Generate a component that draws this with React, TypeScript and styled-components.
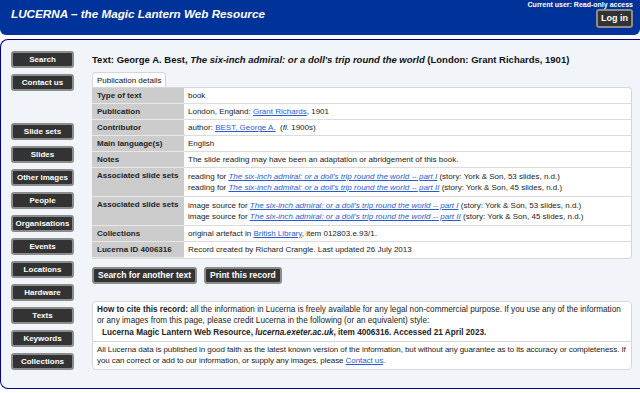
import React from 'react';
import styled, { createGlobalStyle } from 'styled-components';

const GlobalStyle = createGlobalStyle`
  html, body {
    margin: 0;
    padding: 0;
    background: #ffffff;
    font-family: "Liberation Sans", Arial, sans-serif;
  }
`;

const Page = styled.div`
  width: 640px;
  height: 393px;
  overflow: hidden;
  display: flex;
  flex-direction: column;
`;

const Header = styled.header`
  height: 35px;
  background: #003399;
  border-bottom-left-radius: 6px;
  border-bottom-right-radius: 6px;
  display: flex;
  justify-content: space-between;
  align-items: flex-start;
  padding: 0 7px 0 11px;
  box-sizing: border-box;
`;

const SiteTitle = styled.h1`
  margin: 7px 0 0;
  color: #ffffff;
  font-size: 11.7px;
  font-weight: bold;
  font-style: italic;
`;

const UserBox = styled.div`
  display: flex;
  flex-direction: column;
  align-items: flex-end;
  padding-top: 1px;
  gap: 1px;
`;

const UserText = styled.div`
  color: #ffffff;
  font-size: 7px;
  font-weight: bold;
`;

const Button = styled.button`
  background: #333333;
  color: #ffffff;
  border: 2px solid #8c8c8c;
  border-radius: 3px;
  font-family: inherit;
  font-weight: bold;
  font-size: 8.5px;
  padding: 0 4px;
  height: 17px;
  line-height: 13px;
  cursor: pointer;
  white-space: nowrap;
`;

const LoginButton = styled(Button)`
  height: 19px;
  font-size: 9px;
  padding: 0 3px;
`;

const Panel = styled.div`
  margin-top: 4px;
  flex: 1;
  margin-bottom: 4px;
  border: 1px solid #000080;
  border-right: none;
  border-radius: 8px 0 0 8px;
  background: #f1f5fa;
  display: flex;
  overflow: hidden;
`;

const Sidebar = styled.nav`
  width: 91px;
  flex: none;
  display: flex;
  flex-direction: column;
  padding: 11px 0 0 10px;
  box-sizing: border-box;
`;

const NavGroup = styled.div<{ $gapAfter?: number }>`
  display: flex;
  flex-direction: column;
  gap: 6px;
  margin-bottom: ${({ $gapAfter }) => $gapAfter ?? 0}px;
`;

const NavButton = styled(Button)`
  width: 63px;
  padding: 0;
  font-size: 8px;
`;

const Content = styled.main`
  flex: 1;
  padding: 14px 8px 0 0;
  display: flex;
  flex-direction: column;
`;

const RecordTitle = styled.h2`
  margin: 0;
  font-size: 9.5px;
  font-weight: bold;
  color: #111;
`;

const Tab = styled.div`
  margin-top: 7px;
  align-self: flex-start;
  background: #ffffff;
  border: 1px solid #d6d6d6;
  border-bottom: none;
  border-radius: 4px 4px 0 0;
  font-size: 8px;
  padding: 3px 4px 2px;
  color: #111;
`;

const Table = styled.table`
  width: 100%;
  border-collapse: separate;
  border-spacing: 0;
  background: #ffffff;
  border: 1px solid #d6d6d6;
  border-left: none;
  border-radius: 0 4px 4px 0;
  font-size: 8px;
  color: #222;
`;

const LabelCell = styled.th`
  width: 82px;
  background: #cccccc;
  text-align: left;
  vertical-align: top;
  font-weight: bold;
  padding: 3px 5px 2px;
  line-height: 10px;
  border-bottom: 1px solid #e8e8e8;
  color: #222;
`;

const ValueCell = styled.td<{ $multi?: boolean }>`
  padding: ${({ $multi }) => ($multi ? '3px 4px 3px' : '3px 4px 2px')};
  line-height: ${({ $multi }) => ($multi ? '11px' : '10px')};
  border-bottom: 1px solid #dcdcdc;
  vertical-align: top;
  tr:last-child > & {
    border-bottom: none;
  }
`;

const Link = styled.a<{ $italic?: boolean }>`
  color: #2a5bd7;
  text-decoration: underline;
  font-style: ${({ $italic }) => ($italic ? 'italic' : 'normal')};
`;

const Actions = styled.div`
  display: flex;
  gap: 7px;
  margin-top: 8px;
`;

const CiteBox = styled.section`
  margin-top: 17px;
  background: #ffffff;
  border: 1px solid #d6d6d6;
  border-radius: 4px;
  font-size: 8px;
  color: #222;
`;

const CitePart = styled.div<{ $divider?: boolean }>`
  padding: 2px 4px 3px;
  line-height: 11px;
  font-size: ${({ $divider }) => ($divider ? '8px' : '8.2px')};
  letter-spacing: ${({ $divider }) => ($divider ? '-0.08px' : '0')};
  border-top: ${({ $divider }) => ($divider ? '1px solid #d6d6d6' : 'none')};
`;

const CiteLine = styled.div`
  font-weight: bold;
  padding-left: 5px;
  margin-top: 1px;
`;

const rows: { label: string; value: React.ReactNode; multi?: boolean }[] = [
  { label: 'Type of text', value: 'book' },
  {
    label: 'Publication',
    value: (
      <>
        London, England: <Link href="#">Grant Richards</Link>, 1901
      </>
    ),
  },
  {
    label: 'Contributor',
    value: (
      <>
        author: <Link href="#">BEST, George A.</Link>&nbsp; (<i>fl.</i> 1900s)
      </>
    ),
  },
  { label: 'Main language(s)', value: 'English' },
  { label: 'Notes', value: 'The slide reading may have been an adaptation or abridgement of this book.' },
  {
    label: 'Associated slide sets',
    multi: true,
    value: (
      <>
        reading for <Link href="#" $italic>The six-inch admiral: or a doll's trip round the world -- part I</Link> (story: York &amp; Son, 53 slides, n.d.)
        <br />
        reading for <Link href="#" $italic>The six-inch admiral: or a doll's trip round the world -- part II</Link> (story: York &amp; Son, 45 slides, n.d.)
      </>
    ),
  },
  {
    label: 'Associated slide sets',
    multi: true,
    value: (
      <>
        image source for <Link href="#" $italic>The six-inch admiral: or a doll's trip round the world -- part I</Link> (story: York &amp; Son, 53 slides, n.d.)
        <br />
        image source for <Link href="#" $italic>The six-inch admiral: or a doll's trip round the world -- part II</Link> (story: York &amp; Son, 45 slides, n.d.)
      </>
    ),
  },
  {
    label: 'Collections',
    value: (
      <>
        original artefact in <Link href="#">British Library</Link>, item 012803.e.93/1.
      </>
    ),
  },
  { label: 'Lucerna ID 4006316', value: 'Record created by Richard Crangle. Last updated 26 July 2013' },
];

const navTop = ['Search', 'Contact us'];
const navMain = ['Slide sets', 'Slides', 'Other images', 'People', 'Organisations', 'Events', 'Locations', 'Hardware', 'Texts', 'Keywords', 'Collections'];

export default function App() {
  return (
    <Page>
      <GlobalStyle />
      <Header>
        <SiteTitle>LUCERNA – the Magic Lantern Web Resource</SiteTitle>
        <UserBox>
          <UserText>Current user: Read-only access</UserText>
          <LoginButton>Log in</LoginButton>
        </UserBox>
      </Header>
      <Panel>
        <Sidebar>
          <NavGroup $gapAfter={32}>
            {navTop.map((l) => (
              <NavButton key={l}>{l}</NavButton>
            ))}
          </NavGroup>
          <NavGroup>
            {navMain.map((l) => (
              <NavButton key={l}>{l}</NavButton>
            ))}
          </NavGroup>
        </Sidebar>
        <Content>
          <RecordTitle>
            Text: George A. Best, <i>The six-inch admiral: or a doll's trip round the world</i> (London: Grant Richards, 1901)
          </RecordTitle>
          <Tab>Publication details</Tab>
          <Table>
            <tbody>
              {rows.map((r, i) => (
                <tr key={i}>
                  <LabelCell>{r.label}</LabelCell>
                  <ValueCell $multi={r.multi}>{r.value}</ValueCell>
                </tr>
              ))}
            </tbody>
          </Table>
          <Actions>
            <Button>Search for another text</Button>
            <Button>Print this record</Button>
          </Actions>
          <CiteBox>
            <CitePart>
              <b>How to cite this record:</b> all the information in Lucerna is freely available for any legal non-commercial purpose. If you use any of the information or any images from this page, please credit Lucerna in the following (or an equivalent) style:
              <CiteLine>
                Lucerna Magic Lantern Web Resource, <i>lucerna.exeter.ac.uk</i>, item 4006316. Accessed 21 April 2023.
              </CiteLine>
            </CitePart>
            <CitePart $divider>
              All Lucerna data is published in good faith as the latest known version of the information, but without any guarantee as to its accuracy or completeness. If you can correct or add to our information, or supply any images, please <Link href="#">Contact us</Link>.
            </CitePart>
          </CiteBox>
        </Content>
      </Panel>
    </Page>
  );
}
